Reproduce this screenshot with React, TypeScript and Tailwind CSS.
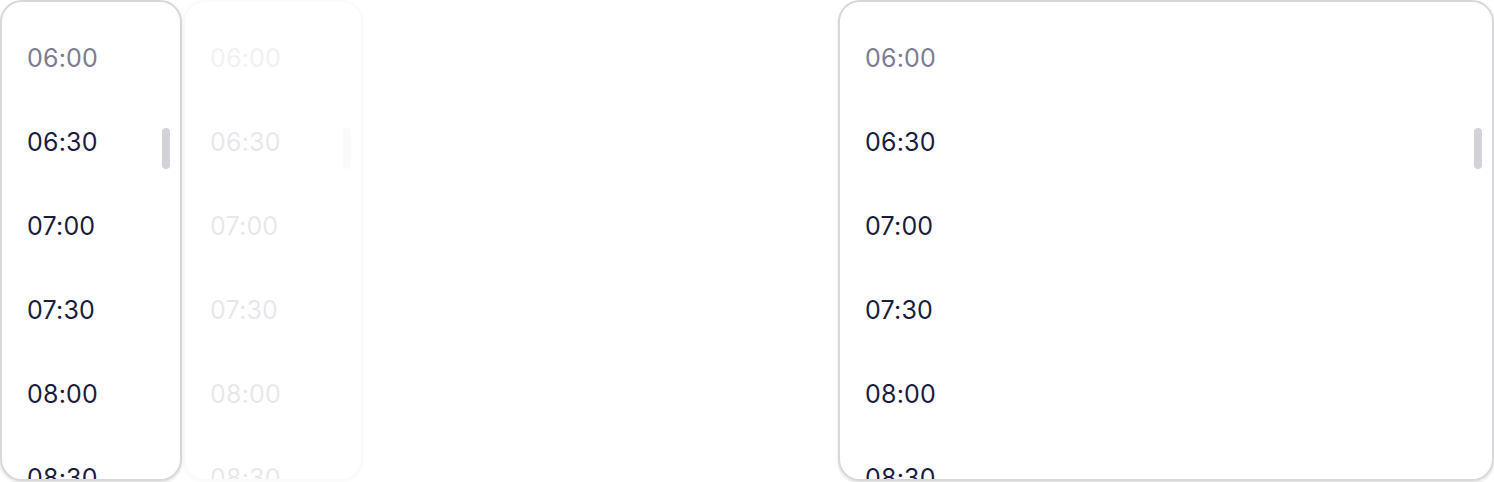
import React from "react";

const times = ["06:00", "06:30", "07:00", "07:30", "08:00", "08:30"];

const TimeList = ({ className }: { className: string }) => {
  return (
    <div
      className={
        "relative h-[481px] overflow-hidden rounded-[22px] border-2 border-[#d8d8da] bg-white shadow-[0_2px_3px_rgba(0,0,0,0.12)] " +
        className
      }
    >
      <div className="flex flex-col pt-[15px]">
        {times.map((t, i) => (
          <div
            key={t}
            className={
              "flex h-[84px] shrink-0 items-center pl-[25px] text-[25px] tracking-[0.2px] " +
              (i === 0 ? "text-[#7c7d90]" : "text-[#1b1d3e]")
            }
          >
            {t}
          </div>
        ))}
      </div>
      <div className="absolute right-[10px] top-[126px] h-[41px] w-[8px] rounded-full bg-[#d2d2d8]" />
    </div>
  );
};

export default function App() {
  return (
    <div
      className="flex h-[482px] w-[1494px] items-start bg-white"
      style={{ fontFamily: "Inter, 'Noto Sans', sans-serif" }}
    >
      <TimeList className="w-[182px]" />
      <TimeList className="ml-[1px] w-[180px] opacity-10" />
      <TimeList className="ml-auto w-[656px]" />
    </div>
  );
}
